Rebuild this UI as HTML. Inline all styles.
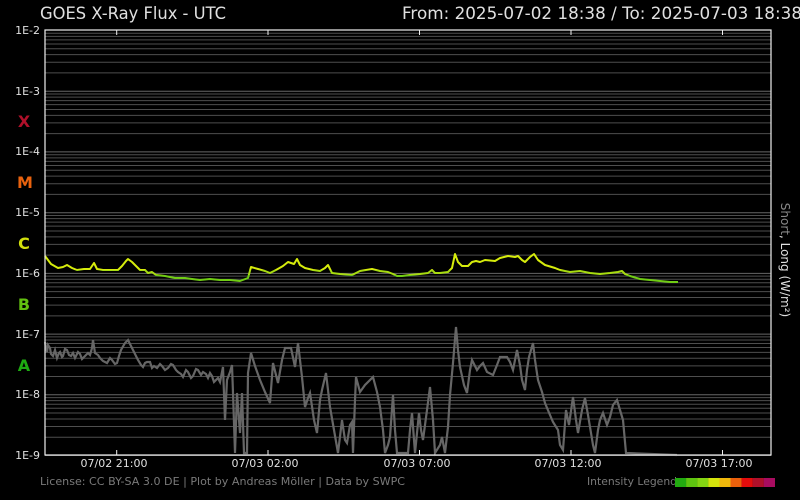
<!DOCTYPE html>
<html><head><meta charset="utf-8"><style>
html,body{margin:0;padding:0;background:#000;}
svg{display:block;font-family:"DejaVu Sans","Liberation Sans",sans-serif;}
</style></head><body>
<svg width="800" height="500" viewBox="0 0 800 500" xmlns="http://www.w3.org/2000/svg">
<rect width="800" height="500" fill="#000"/>
<defs>
<g id="dec" stroke="#4e4e4e" stroke-width="1">
<line x1="45" x2="771" y1="0" y2="0" stroke="#666"/>
<line x1="45" x2="771" y1="-18.28" y2="-18.28"/>
<line x1="45" x2="771" y1="-28.97" y2="-28.97"/>
<line x1="45" x2="771" y1="-36.55" y2="-36.55"/>
<line x1="45" x2="771" y1="-42.44" y2="-42.44"/>
<line x1="45" x2="771" y1="-47.24" y2="-47.24"/>
<line x1="45" x2="771" y1="-51.30" y2="-51.30"/>
<line x1="45" x2="771" y1="-54.82" y2="-54.82"/>
<line x1="45" x2="771" y1="-57.92" y2="-57.92"/>
</g>
<clipPath id="ctop"><rect x="0" y="0" width="800" height="270"/></clipPath>
<clipPath id="cmid"><rect x="0" y="270" width="800" height="5"/></clipPath>
<clipPath id="cbot"><rect x="0" y="275" width="800" height="100"/></clipPath>
<polyline id="lng" fill="none" stroke-width="2" stroke-linejoin="round" points="45,256 48,260 51,264 58,268 63,267 67,265 72,268 77,270 84,269 90,269 94,263 97,269 103,270 112,270 118,270 122,266 126,261 128,259 132,262 136,266 140,270 145,270 148,273 152,272 156,275 165,276 175,278 185,278 192,279 200,280 210,279 220,280 230,280 240,281 248,278 251,267 258,269 265,271 270,273 276,270 283,266 288,262 294,264 297,259 300,265 305,268 313,270 320,271 325,268 328,265 332,273 340,274 352,275 360,271 372,269 380,271 388,272 393,274 397,276 402,276 410,275 420,274 428,273 432,270 435,273 440,273 448,272 452,268 455,254 458,262 462,266 468,266 472,262 476,261 480,262 485,260 495,261 500,258 508,256 515,257 518,256 522,260 525,262 530,257 534,254 538,260 545,265 555,268 560,270 570,272 580,271 590,273 600,274 610,273 618,272 622,271 625,274 630,276 640,279 650,280 660,281 670,282 678,282"/>
</defs>
<use href="#dec" transform="translate(0,455.5)"/>
<use href="#dec" transform="translate(0,394.8)"/>
<use href="#dec" transform="translate(0,334.1)"/>
<use href="#dec" transform="translate(0,273.4)"/>
<use href="#dec" transform="translate(0,212.7)"/>
<use href="#dec" transform="translate(0,151.9)"/>
<use href="#dec" transform="translate(0,91.2)"/>

<text x="40" y="19" fill="#e0e0e0" font-size="17" textLength="186" lengthAdjust="spacingAndGlyphs">GOES X-Ray Flux - UTC</text>
<text x="402" y="19" fill="#e0e0e0" font-size="17" textLength="400" lengthAdjust="spacingAndGlyphs">From: 2025-07-02 18:38  /  To: 2025-07-03 18:38</text>

<g fill="#e0e0e0" font-size="11" text-anchor="end">
<text x="40" y="34">1E-2</text>
<text x="40" y="95">1E-3</text>
<text x="40" y="155">1E-4</text>
<text x="40" y="216">1E-5</text>
<text x="40" y="277">1E-6</text>
<text x="40" y="338">1E-7</text>
<text x="40" y="398">1E-8</text>
<text x="40" y="459">1E-9</text>
</g>
<g font-size="16" font-weight="bold" text-anchor="middle">
<text x="24" y="127" fill="#b0102a">X</text>
<text x="25" y="188" fill="#e8620e">M</text>
<text x="24" y="249" fill="#d2e00c">C</text>
<text x="24" y="310" fill="#62c010">B</text>
<text x="24" y="371" fill="#1eaa12">A</text>
</g>

<polyline fill="none" stroke="#666" stroke-width="2.2" stroke-linejoin="miter" points="45,342 46,348 47,352 48,345 50,348 51,354 53,356 55,350 57,358 59,353 60,352 62,357 63,356 65,349 67,350 69,355 71,356 73,353 75,358 78,352 80,354 82,359 85,356 88,353 90,355 92,348 93,340 95,353 98,355 100,358 103,361 107,363 110,358 112,360 115,364 117,363 119,356 121,350 125,343 128,340 131,346 133,350 136,356 138,360 141,365 143,367 145,363 147,362 150,362 152,368 154,366 157,368 160,364 162,366 165,370 168,368 171,364 173,365 176,370 178,372 181,374 183,377 186,370 188,372 191,378 193,376 196,369 198,370 201,375 203,372 206,374 208,378 210,373 212,376 214,382 216,380 218,378 220,382 223,367 225,420 227,380 230,372 232,365 233,393 235,453 237,393 240,433 242,393 244,453 247,453 248,373 251,353 255,366 260,380 265,392 270,403 273,363 276,375 278,383 282,360 285,348 291,348 295,367 298,343 302,377 305,407 308,398 310,393 314,420 317,433 320,400 322,390 326,373 330,407 334,430 338,453 342,420 345,440 347,443 350,425 352,422 353,453 355,400 356,377 360,392 365,385 370,380 373,377 377,392 380,407 383,430 385,453 388,445 390,437 393,395 395,430 397,453 408,453 410,430 412,413 415,453 419,413 421,430 423,440 427,410 430,387 433,420 435,453 440,445 442,437 445,453 448,427 450,395 453,363 456,327 458,350 460,367 464,385 467,393 470,370 472,360 475,366 477,370 480,366 483,363 487,372 493,375 497,365 500,357 507,357 510,362 513,370 517,350 520,365 522,380 525,390 527,370 529,357 533,343 535,360 538,380 542,392 545,403 550,415 553,422 558,430 560,445 563,450 566,410 569,425 573,397 576,420 578,433 582,410 585,398 588,415 590,427 593,445 595,453 598,430 600,420 603,413 607,425 610,417 613,405 617,400 620,410 623,420 626,453 677,455"/>

<use href="#lng" stroke="#d6ec0c" clip-path="url(#ctop)"/>
<use href="#lng" stroke="#a8dc10" clip-path="url(#cmid)"/>
<use href="#lng" stroke="#70cc14" clip-path="url(#cbot)"/>

<rect x="45" y="30" width="726" height="425" fill="none" stroke="#f0f0f0" stroke-width="1.2"/>
<g stroke="#f0f0f0" stroke-width="1">
<line x1="116.7" x2="116.7" y1="30" y2="35"/><line x1="116.7" x2="116.7" y1="450" y2="455"/>
<line x1="268" x2="268" y1="30" y2="35"/><line x1="268" x2="268" y1="450" y2="455"/>
<line x1="419.5" x2="419.5" y1="30" y2="35"/><line x1="419.5" x2="419.5" y1="450" y2="455"/>
<line x1="571" x2="571" y1="30" y2="35"/><line x1="571" x2="571" y1="450" y2="455"/>
<line x1="722.5" x2="722.5" y1="30" y2="35"/><line x1="722.5" x2="722.5" y1="450" y2="455"/>
</g>
<g fill="#e0e0e0" font-size="11" text-anchor="middle">
<text x="114" y="467">07/02 21:00</text>
<text x="265" y="467">07/03 02:00</text>
<text x="417" y="467">07/03 07:00</text>
<text x="568" y="467">07/03 12:00</text>
<text x="719" y="467">07/03 17:00</text>
</g>
<text transform="translate(781,260) rotate(90)" font-size="12" text-anchor="middle"><tspan fill="#888">Short</tspan><tspan fill="#e0e0e0">, Long (W/m²)</tspan></text>

<text x="40" y="485" fill="#7a7a7a" font-size="11" textLength="365" lengthAdjust="spacingAndGlyphs">License: CC BY-SA 3.0 DE | Plot by Andreas Möller | Data by SWPC</text>
<text x="587" y="485" fill="#7a7a7a" font-size="11" textLength="90" lengthAdjust="spacingAndGlyphs">Intensity Legend</text>
<g>
<rect x="675" y="478" width="11.2" height="9" fill="#22aa10"/>
<rect x="686.1" y="478" width="11.2" height="9" fill="#5ec410"/>
<rect x="697.2" y="478" width="11.2" height="9" fill="#84d412"/>
<rect x="708.3" y="478" width="11.2" height="9" fill="#d4e40c"/>
<rect x="719.4" y="478" width="11.2" height="9" fill="#f0b80c"/>
<rect x="730.5" y="478" width="11.2" height="9" fill="#ea600c"/>
<rect x="741.6" y="478" width="11.2" height="9" fill="#e20c0c"/>
<rect x="752.7" y="478" width="11.2" height="9" fill="#b0102a"/>
<rect x="763.8" y="478" width="11.2" height="9" fill="#a80c60"/>
</g>
</svg>
</body></html>
